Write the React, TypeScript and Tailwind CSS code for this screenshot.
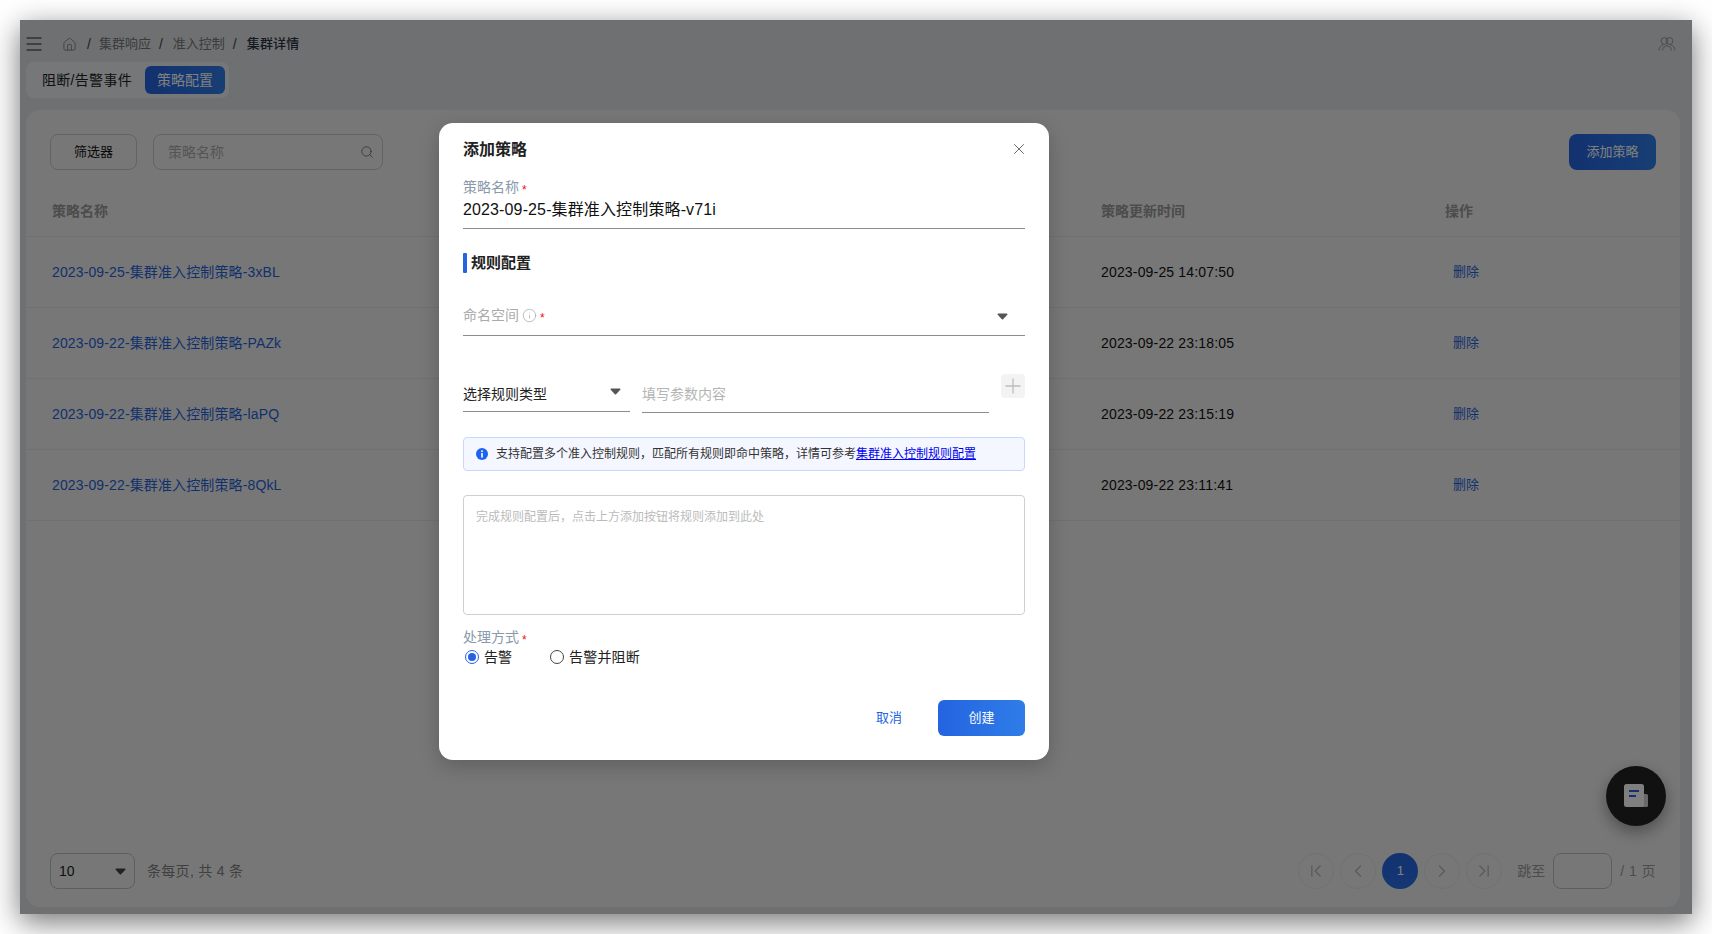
import { ChevronFirst, ChevronLast, ChevronLeft, ChevronRight, House, Info, Plus, Search, X } from "lucide-react";

const rows = [
  { name: "2023-09-25-集群准入控制策略-3xBL", time: "2023-09-25 14:07:50" },
  { name: "2023-09-22-集群准入控制策略-PAZk", time: "2023-09-22 23:18:05" },
  { name: "2023-09-22-集群准入控制策略-laPQ", time: "2023-09-22 23:15:19" },
  { name: "2023-09-22-集群准入控制策略-8QkL", time: "2023-09-22 23:11:41" },
];

const Caret = ({ className }: { className?: string }) => (
  <svg viewBox="0 0 12 8" className={className} fill="currentColor">
    <path d="M1.2 0.5h9.6c.8 0 1.2.9.7 1.5L6.7 7.2c-.4.4-1 .4-1.4 0L.5 2C0 1.4.4.5 1.2.5z" />
  </svg>
);

const Star = () => <span className="text-[#f01010] text-[12px] ml-[3px] mt-[5px] leading-none">*</span>;

const PageBtn = ({ children }: { children: React.ReactNode }) => (
  <div className="w-[36px] h-[36px] rounded-full border border-[#e2e2e2] flex items-center justify-center text-[#b4b4b4]">
    {children}
  </div>
);

export default function App() {
  return (
    <div
      className="w-full h-[934px] bg-white p-[20px] overflow-hidden"
      style={{ fontFamily: '"Liberation Sans", "Noto Sans CJK SC", sans-serif' }}
    >
      <div className="relative w-[1672px] h-[894px] bg-[#dfe1e5] flex flex-col overflow-hidden shadow-[0_8px_28px_rgba(0,0,0,0.55)]">
        {/* breadcrumb */}
        <div className="flex items-center h-[20px] mt-[14px] mb-[8px] pl-[6px] pr-[16px] text-[13px] leading-[20px]">
          <svg viewBox="0 0 16 14" className="w-[16px] h-[14px] text-[#222]" fill="none" stroke="currentColor" strokeWidth="1.2">
            <path d="M0.5 1h15M0.5 7h15M0.5 13h15" />
          </svg>
          <House className="w-[15px] h-[15px] ml-[20px] text-[#777]" strokeWidth={1.3} />
          <span className="ml-[10px] mr-[8px] text-[14px] text-[#444]">/</span>
          <span className="text-[#777]">集群响应</span>
          <span className="ml-[8px] mr-[10px] text-[14px] text-[#444]">/</span>
          <span className="text-[#777]">准入控制</span>
          <span className="ml-[8px] mr-[10px] text-[14px] text-[#444]">/</span>
          <span className="text-[#2b3545] font-medium tracking-[0.2px]">集群详情</span>
          <svg viewBox="0 0 18 16" className="w-[18px] h-[16px] ml-auto text-[#999]" fill="none" stroke="currentColor" strokeWidth="1">
            <circle cx="6.5" cy="5" r="3.4" />
            <circle cx="11.5" cy="5" r="3.4" />
            <path d="M1 14.5c.3-3.4 2-5.3 4.5-5.6M17 14.5c-.3-3.4-2-5.3-4.5-5.6M4.5 14.5c.4-3 2-4.6 4.5-4.6s4.1 1.6 4.5 4.6" />
          </svg>
        </div>

        {/* tabs */}
        <div className="ml-[6px] w-[203px] h-[36px] p-[4px] rounded-[8px] bg-[#eceef1] flex items-center text-[14px] leading-[20px]">
          <span className="pl-[12px] w-[115px] shrink-0 text-[#222] tracking-[0.3px]">阻断/告警事件</span>
          <span className="w-[80px] h-[28px] shrink-0 rounded-[6px] bg-gradient-to-r from-[#2563e0] to-[#2f7de8] text-white flex items-center justify-center">
            策略配置
          </span>
        </div>

        {/* card */}
        <div className="relative ml-[6px] mr-[12px] mt-[12px] mb-[7px] flex-1 rounded-[14px] bg-[#efefef] flex flex-col">
          <div className="flex items-center pt-[24px] px-[24px]">
            <div className="w-[87px] h-[36px] rounded-[8px] border border-[#c6c6c6] flex items-center justify-center text-[13px] text-[#111]">
              筛选器
            </div>
            <div className="ml-[16px] w-[230px] h-[36px] rounded-[8px] border border-[#c6c6c6] flex items-center pl-[14px] pr-[8px] text-[14px] text-[#aaa]">
              <span className="mt-[1px]">策略名称</span>
              <Search className="w-[14px] h-[14px] ml-auto mt-[-1px] text-[#666]" strokeWidth={1.4} />
            </div>
            <div className="ml-auto w-[87px] h-[36px] rounded-[8px] bg-gradient-to-r from-[#2563e0] to-[#2f7de8] flex items-center justify-center text-[13px] text-white">
              添加策略
            </div>
          </div>

          <div className="grid grid-cols-[1049px_344px_1fr] pl-[26px] pt-[31px] pb-[15px] border-b border-[#e0e0e0] text-[14px] leading-[20px] font-bold text-[#999]">
            <span>策略名称</span>
            <span>策略更新时间</span>
            <span>操作</span>
          </div>

          {rows.map((row) => (
            <div key={row.name} className="grid grid-cols-[1049px_344px_1fr] items-center pl-[26px] h-[71px] border-b border-[#e0e0e0] text-[14px]">
              <span className="text-[#2563d8] tracking-[0.13px]">{row.name}</span>
              <span className="text-[#111] tracking-[0.17px]">{row.time}</span>
              <span className="pl-[8px] text-[13px] text-[#2563d8]">删除</span>
            </div>
          ))}

          {/* pagination */}
          <div className="mt-auto mb-[18px] px-[24px] flex items-center text-[14px] text-[#808080]">
            <div className="w-[85px] h-[36px] rounded-[8px] border border-[#bdbdbd] flex items-center pl-[8px] pr-[8px] text-[#222]">
              10
              <Caret className="w-[11px] h-[7px] ml-auto text-[#444]" />
            </div>
            <span className="ml-[12px] tracking-[0.3px]">条每页, 共 4 条</span>
            <div className="ml-auto flex items-center gap-[6px]">
              <PageBtn><ChevronFirst className="w-[20px] h-[20px]" strokeWidth={1.6} /></PageBtn>
              <PageBtn><ChevronLeft className="w-[20px] h-[20px]" strokeWidth={1.6} /></PageBtn>
              <div className="w-[36px] h-[36px] rounded-full bg-gradient-to-b from-[#2563e0] to-[#2a6fe8] text-white flex items-center justify-center text-[13px]">
                1
              </div>
              <PageBtn><ChevronRight className="w-[20px] h-[20px]" strokeWidth={1.6} /></PageBtn>
              <PageBtn><ChevronLast className="w-[20px] h-[20px]" strokeWidth={1.6} /></PageBtn>
              <span className="ml-[9px] text-[#999]">跳至</span>
              <div className="ml-[2px] w-[59px] h-[36px] rounded-[8px] border border-[#bdbdbd]" />
              <span className="ml-[2px] text-[#999] tracking-[0.45px]">/ 1 页</span>
            </div>
          </div>
        </div>

        {/* floating help button */}
        <div className="absolute right-[26px] bottom-[88px] w-[60px] h-[60px] rounded-full bg-[#222] shadow-[0_6px_16px_rgba(0,0,0,0.35)] flex items-center justify-center">
          <svg viewBox="0 0 26 26" className="w-[26px] h-[26px]">
            <rect x="18" y="11" width="7" height="13" rx="1.5" fill="#d0d0d0" />
            <rect x="1" y="1" width="20" height="23" rx="2.5" fill="#ffffff" />
            <path d="M6 8h10" stroke="#2563e0" strokeWidth="2" />
            <path d="M6 13h7" stroke="#2563e0" strokeWidth="2" />
          </svg>
        </div>

        {/* modal */}
        <div className="absolute inset-0 bg-black/50 pt-[103px] pl-[419px]">
          <div className="relative w-[610px] h-[637px] rounded-[14px] bg-white px-[24px] shadow-[0_6px_20px_rgba(0,0,0,0.2)] flex flex-col">
            <div className="flex items-center justify-between pt-[12px] h-[42px]">
              <span className="text-[16px] leading-[22px] font-bold text-[#222]">添加策略</span>
              <X className="w-[18px] h-[18px] mr-[-3px] mt-[-2px] text-[#666]" strokeWidth={1.3} />
            </div>

            <div className="mt-[12px] text-[14px] leading-[20px] text-[#8a99ab] flex items-center">
              策略名称<Star />
            </div>
            <div className="h-[32px] pt-[1px] pb-[7px] border-b border-[#8c8c8c] text-[16px] leading-[24px] text-[#111] tracking-[0.13px]">
              2023-09-25-集群准入控制策略-v71i
            </div>

            <div className="mt-[24px] flex items-center h-[20px]">
              <span className="w-[4px] h-[20px] rounded-[1px] bg-[#2563e0]" />
              <span className="ml-[4px] text-[15px] font-bold text-[#222]">规则配置</span>
            </div>

            <div className="mt-[23px] h-[40px] pt-[9px] pb-[10px] border-b border-[#8c8c8c] flex items-center text-[14px] leading-[20px] text-[#aaa]">
              <span>命名空间</span>
              <Info className="w-[15px] h-[15px] ml-[3px] text-[#aaa]" strokeWidth={1.2} />
              <Star />
              <Caret className="w-[11px] h-[7px] ml-auto mr-[17px] mt-[3px] text-[#555]" />
            </div>

            <div className="mt-[38px] flex items-start">
              <div className="w-[167px] h-[38px] pt-[10px] border-b border-[#8c8c8c] flex items-start text-[14px] leading-[20px] text-[#222]">
                选择规则类型
                <Caret className="w-[11px] h-[7px] ml-auto mr-[9px] mt-[4px] text-[#555]" />
              </div>
              <div className="ml-[12px] w-[347px] h-[39px] pt-[10px] border-b border-[#8c8c8c] text-[14px] leading-[20px] text-[#b5b5b5]">
                填写参数内容
              </div>
              <div className="ml-[12px] w-[24px] h-[24px] rounded-[4px] bg-[#f3f3f3] flex items-center justify-center text-[#bdbdbd]">
                <Plus className="w-[24px] h-[24px]" strokeWidth={1.3} />
              </div>
            </div>

            <div className="mt-[24px] h-[34px] rounded-[4px] border border-[#c7d8fb] bg-[#f4f7ff] flex items-center pl-[12px] text-[12px] text-[#333]">
              <svg viewBox="0 0 12 12" className="w-[12px] h-[12px] mr-[8px]">
                <circle cx="6" cy="6" r="6" fill="#1d63f0" />
                <rect x="5.2" y="2.4" width="1.6" height="1.6" fill="#fff" />
                <rect x="5.2" y="5" width="1.6" height="4.6" fill="#fff" />
              </svg>
              <span>支持配置多个准入控制规则，匹配所有规则即命中策略，详情可参考</span>
              <a href="#" className="text-[#0000ee] underline">集群准入控制规则配置</a>
            </div>

            <div className="mt-[24px] h-[120px] rounded-[4px] border border-[#cfcfcf] pl-[12px] pt-[12px] text-[12px] leading-[18px] text-[#bbb]">
              完成规则配置后，点击上方添加按钮将规则添加到此处
            </div>

            <div className="mt-[12px] text-[14px] leading-[20px] text-[#8a99ab] flex items-center">
              处理方式<Star />
            </div>
            <div className="flex items-center text-[14px] leading-[20px] text-[#222]">
              <span className="ml-[2px] w-[14px] h-[14px] rounded-full border border-[#2563e0] flex items-center justify-center">
                <span className="w-[8px] h-[8px] rounded-full bg-[#2563e0]" />
              </span>
              <span className="ml-[5px]">告警</span>
              <span className="ml-[38px] w-[14px] h-[14px] rounded-full border border-[#444]" />
              <span className="ml-[5px] tracking-[0.2px]">告警并阻断</span>
            </div>

            <div className="mt-[33px] flex items-center justify-end text-[13px]">
              <span className="text-[#2563e0] mr-[36px]">取消</span>
              <div className="w-[87px] h-[36px] rounded-[6px] bg-gradient-to-r from-[#2563e0] to-[#2f7de8] text-white flex items-center justify-center">
                创建
              </div>
            </div>
          </div>
        </div>
      </div>
    </div>
  );
}
